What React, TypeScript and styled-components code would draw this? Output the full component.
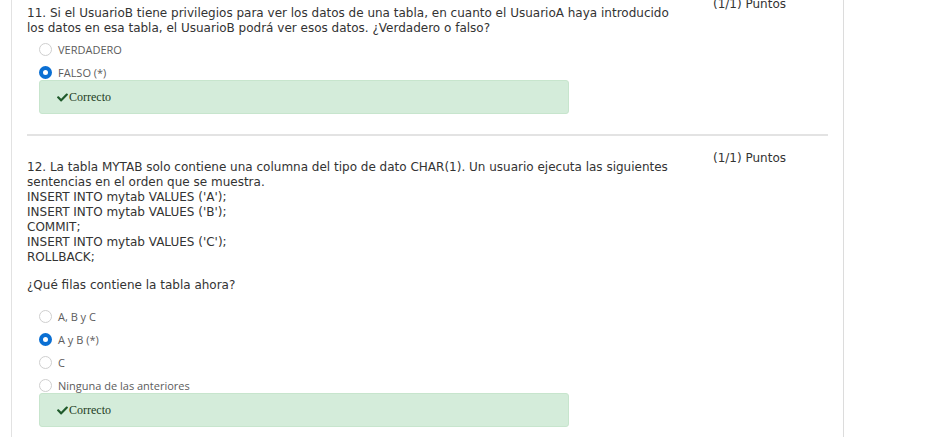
import styled, { createGlobalStyle } from 'styled-components';
import { FaCheck } from 'react-icons/fa';

const Global = createGlobalStyle`
  body {
    margin: 0;
    background: #fff;
    font-family: 'DejaVu Sans', Verdana, sans-serif;
    color: #333;
  }
`;

const Panel = styled.div`
  box-sizing: border-box;
  width: 833px;
  margin: -3px 0 0 11px;
  padding: 0 15px 10px 15px;
  border-left: 1px solid #e2e2e2;
  border-right: 1px solid #dcdcdc;
  min-height: 440px;
`;

const Question = styled.div`
  padding-bottom: 20px;
`;

const Separator = styled.hr`
  margin: 0 0 15px 0;
  border: 0;
  height: 2px;
  background: #e3e3e3;
`;

const Header = styled.div`
  display: grid;
  grid-template-columns: 660px 1fr;
  gap: 26px;
`;

const Statement = styled.div`
  padding-top: 9px;
  font-size: 12px;
  line-height: 15px;
  color: #333;
`;

const BlankLine = styled.div`
  height: 13px;
`;

const Points = styled.div`
  font-size: 12px;
  line-height: 15px;
  color: #333;
`;

const Options = styled.div<{ $top: number }>`
  display: flex;
  flex-direction: column;
  gap: 7px;
  margin: ${(p) => p.$top}px 0 0 12px;
`;

const Option = styled.label`
  display: flex;
  align-items: center;
  gap: 6px;
  height: 16px;
  font-family: 'Open Sans', 'Liberation Sans', Arial, sans-serif;
  font-size: 11px;
  color: #5c5c5c;
`;

const Radio = styled.span<{ $checked?: boolean }>`
  box-sizing: border-box;
  width: 13px;
  height: 13px;
  border-radius: 50%;
  background: #fff;
  border: ${(p) => (p.$checked ? '4px solid #0a6fd3' : '1px solid #cfcfcf')};
`;

const Feedback = styled.div`
  display: flex;
  align-items: center;
  box-sizing: border-box;
  width: 530px;
  height: 34px;
  margin-left: 12px;
  padding-left: 17px;
  background: #d4ecda;
  border: 1px solid #c7e5cd;
  border-radius: 3px;
  font-family: 'Liberation Serif', 'Times New Roman', serif;
  font-size: 12px;
  color: #1d3d23;
  svg {
    color: #1f5a2b;
    margin-right: 1px;
  }
`;

type Q = {
  lines: string[];
  options: { label: string; checked?: boolean }[];
  top: number;
};

const questions: Q[] = [
  {
    lines: [
      '11. Si el UsuarioB tiene privilegios para ver los datos de una tabla, en cuanto el UsuarioA haya introducido los datos en esa tabla, el UsuarioB podrá ver esos datos. ¿Verdadero o falso?',
    ],
    options: [{ label: 'VERDADERO' }, { label: 'FALSO (*)', checked: true }],
    top: 5,
  },
  {
    lines: [
      '12. La tabla MYTAB solo contiene una columna del tipo de dato CHAR(1). Un usuario ejecuta las siguientes sentencias en el orden que se muestra.',
      "INSERT INTO mytab VALUES ('A');",
      "INSERT INTO mytab VALUES ('B');",
      'COMMIT;',
      "INSERT INTO mytab VALUES ('C');",
      'ROLLBACK;',
      '',
      '¿Qué filas contiene la tabla ahora?',
    ],
    options: [
      { label: 'A, B y C' },
      { label: 'A y B (*)', checked: true },
      { label: 'C' },
      { label: 'Ninguna de las anteriores' },
    ],
    top: 15,
  },
];

export default function App() {
  return (
    <>
      <Global />
      <Panel>
        {questions.map((q, i) => (
          <Question key={i}>
            {i > 0 && <Separator />}
            <Header>
              <Statement>
                {q.lines.map((l, j) =>
                  l ? <div key={j}>{l}</div> : <BlankLine key={j} />
                )}
              </Statement>
              <Points>(1/1) Puntos</Points>
            </Header>
            <Options $top={q.top}>
              {q.options.map((o) => (
                <Option key={o.label}>
                  <Radio $checked={o.checked} />
                  {o.label}
                </Option>
              ))}
            </Options>
            <Feedback>
              <FaCheck size={11} />
              Correcto
            </Feedback>
          </Question>
        ))}
      </Panel>
    </>
  );
}
